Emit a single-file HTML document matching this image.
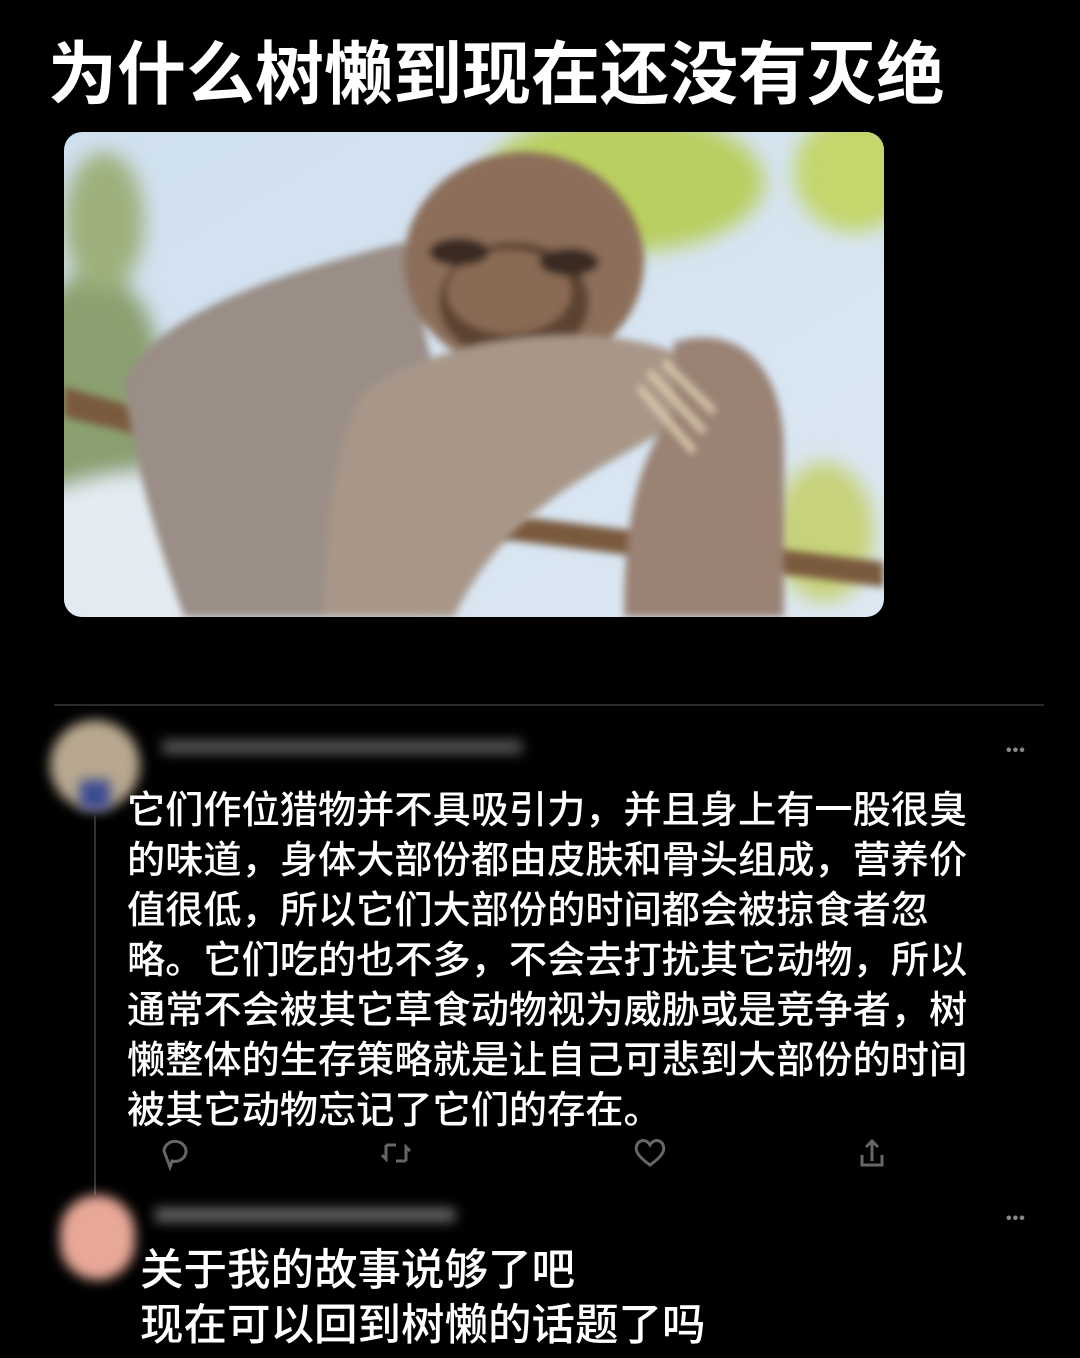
<!DOCTYPE html>
<html><head><meta charset="utf-8"><style>
html,body{margin:0;padding:0;background:#000;width:1080px;height:1358px;overflow:hidden;position:relative}
.f{font-family:"Liberation Sans","Noto Sans CJK SC",sans-serif;color:#fff;position:absolute;white-space:nowrap}
.title{left:48px;top:30px;font-size:69px;font-weight:bold;letter-spacing:0px;line-height:90px}
.pic{position:absolute;left:64px;top:132px;width:820px;height:485px;border-radius:18px;overflow:hidden}
.c1{left:127px;top:786px;font-size:38.2px;line-height:50px;font-weight:500}
.c2{left:140px;top:1244px;font-size:43.5px;line-height:55px;font-weight:500}
.blur{position:absolute;filter:blur(6px)}
</style></head><body>
<div class="f title">为什么树懒到现在还没有灭绝</div>
<div class="pic">
<svg width="820" height="485" viewBox="0 0 820 485">
<defs>
<linearGradient id="sky" x1="0" y1="0" x2="1" y2="1"><stop offset="0" stop-color="#cfe0ef"/><stop offset="1" stop-color="#dce8f3"/></linearGradient>
<filter id="bl"><feGaussianBlur stdDeviation="10"/></filter>
<filter id="bl2"><feGaussianBlur stdDeviation="4"/></filter>
</defs>
<rect width="820" height="485" fill="url(#sky)"/>
<g filter="url(#bl)">
<ellipse cx="560" cy="50" rx="140" ry="70" fill="#b9cf60"/>
<ellipse cx="790" cy="40" rx="60" ry="60" fill="#c4d66c"/>
<ellipse cx="30" cy="260" rx="70" ry="120" fill="#8aa070"/>
<ellipse cx="40" cy="90" rx="40" ry="70" fill="#9db07c"/>
<ellipse cx="90" cy="420" rx="150" ry="80" fill="#e4ecf2"/>
<ellipse cx="250" cy="470" rx="110" ry="40" fill="#d8e2ea"/>
<ellipse cx="760" cy="400" rx="50" ry="70" fill="#c7d27a"/>
</g>
<path d="M0 255 L160 300 L420 380 L820 430 L820 455 L420 405 L150 320 L0 285Z" fill="#7a5a3c" filter="url(#bl2)"/>
<g filter="url(#bl2)">
<path d="M60 250 C90 180 220 140 340 110 L370 240 C320 330 300 420 260 485 L120 485 C90 400 70 330 60 250Z" fill="#9a8e86"/>
<ellipse cx="460" cy="130" rx="120" ry="110" fill="#8c6e5a"/>
<ellipse cx="450" cy="170" rx="75" ry="60" fill="#5b4233"/>
<ellipse cx="445" cy="160" rx="62" ry="42" fill="#8a6a55"/>
<ellipse cx="395" cy="120" rx="30" ry="14" fill="#3a2a22"/>
<ellipse cx="505" cy="130" rx="30" ry="14" fill="#3a2a22"/>
<path d="M300 260 C380 200 540 190 610 220 L630 280 C560 330 450 360 390 485 L260 485 C260 400 270 310 300 260Z" fill="#a89788"/>
<path d="M610 210 C680 190 720 240 720 320 L720 485 L560 485 C560 400 570 330 610 280Z" fill="#9a8274"/>
<path d="M585 240 L640 300 M600 230 L650 280 M575 255 L630 320" stroke="#e8d8b8" stroke-width="5"/>
</g>
</svg>
</div>
<div style="position:absolute;left:54px;top:704px;width:990px;height:2px;background:#2a2a2a"></div>
<div class="blur" style="left:50px;top:720px;width:90px;height:90px;border-radius:45px;background:#b8a890"></div>
<div class="blur" style="left:80px;top:780px;width:30px;height:30px;background:#3a4a90"></div>
<div style="position:absolute;left:94px;top:815px;width:2px;height:380px;background:#333"></div>
<div class="blur" style="left:162px;top:740px;width:360px;height:14px;background:#555"></div>
<div style="position:absolute;left:1006px;top:742px;color:#888;font:bold 16px 'Liberation Sans';letter-spacing:1px">•••</div>
<div class="f c1">它们作位猎物并不具吸引力，并且身上有一股很臭<br>的味道，身体大部份都由皮肤和骨头组成，营养价<br>值很低，所以它们大部份的时间都会被掠食者忽<br>略。它们吃的也不多，不会去打扰其它动物，所以<br>通常不会被其它草食动物视为威胁或是竞争者，树<br>懒整体的生存策略就是让自己可悲到大部份的时间<br>被其它动物忘记了它们的存在。</div>
<svg style="position:absolute;left:0;top:1135px" width="1080" height="40" fill="none" stroke="#666" stroke-width="3">
<path d="M164 16 a11 10 0 1 1 8 10 l-2 6 z"/>
<path d="M386 10 v14 l-4 -4 M386 10 h10 M406 26 v-14 l4 4 M406 26 h-10"/>
<path d="M650 30 c-14 -10 -16 -16 -12 -22 c4 -4 9 -3 12 2 c3 -5 8 -6 12 -2 c4 6 2 12 -12 22z"/>
<path d="M862 20 v10 h20 v-10 M872 26 v-20 M866 12 l6 -6 l6 6"/>
</svg>
<div class="blur" style="left:60px;top:1195px;width:75px;height:85px;border-radius:38px;background:#e8a898"></div>
<div class="blur" style="left:155px;top:1208px;width:300px;height:14px;background:#666"></div>
<div style="position:absolute;left:1006px;top:1210px;color:#888;font:bold 16px 'Liberation Sans';letter-spacing:1px">•••</div>
<div class="f c2">关于我的故事说够了吧<br>现在可以回到树懒的话题了吗</div>
</body></html>
